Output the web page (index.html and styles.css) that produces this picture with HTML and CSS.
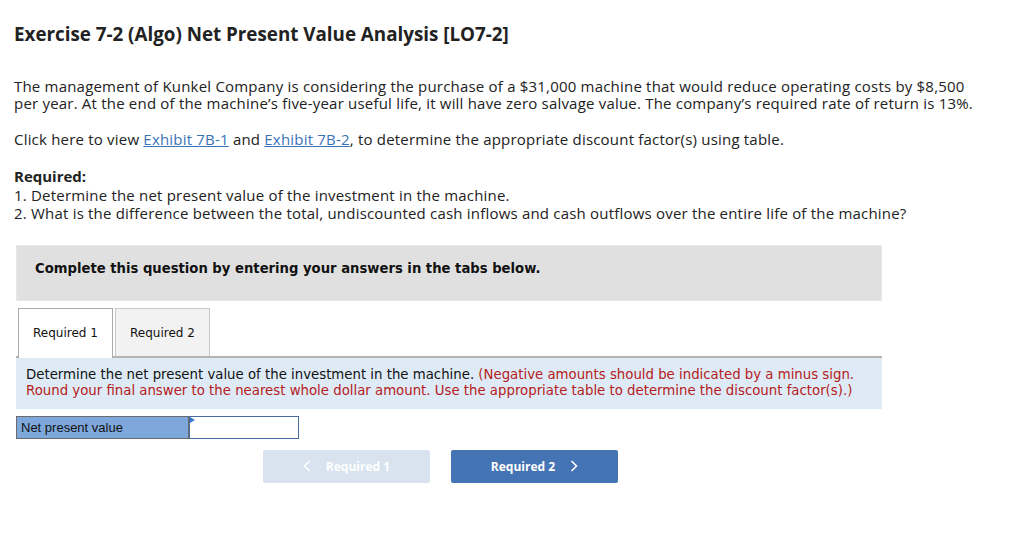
FILE: index.html
```html
<!DOCTYPE html>
<html>
<head>
<meta charset="utf-8">
<link rel="stylesheet" href="styles.css">
</head>
<body>
<div class="page">
  <h1 class="title">Exercise 7-2 (Algo) Net Present Value Analysis [LO7-2]</h1>
  <p class="para">The management of Kunkel Company is considering the purchase of a $31,000 machine that would reduce operating costs by $8,500 per year. At the end of the machine’s five-year useful life, it will have zero salvage value. The company’s required rate of return is 13%.</p>
  <p class="para">Click here to view <a class="link" href="#">Exhibit 7B-1</a> and <a class="link" href="#">Exhibit 7B-2</a>, to determine the appropriate discount factor(s) using table.</p>
  <div class="req">
    <div class="req-head">Required:</div>
    <div>1. Determine the net present value of the investment in the machine.</div>
    <div>2. What is the difference between the total, undiscounted cash inflows and cash outflows over the entire life of the machine?</div>
  </div>
  <div class="widget">
    <div class="banner">Complete this question by entering your answers in the tabs below.</div>
    <div class="tabs">
      <div class="tab active">Required 1</div>
      <div class="tab">Required 2</div>
    </div>
    <div class="instr">Determine the net present value of the investment in the machine. <span class="note">(Negative amounts should be indicated by a minus sign. Round your final answer to the nearest whole dollar amount. Use the appropriate table to determine the discount factor(s).)</span></div>
    <div class="answer-row">
      <div class="answer-label">Net present value</div>
      <div class="answer-input"><span class="flag"></span></div>
    </div>
    <div class="nav">
      <div class="btn btn-prev"><svg class="chev" width="8" height="12" viewBox="0 0 8 12"><path d="M6.5 1 L1.5 6 L6.5 11" fill="none" stroke="#fff" stroke-width="1.6"/></svg><span>Required 1</span></div>
      <div class="btn btn-next"><span>Required 2</span><svg class="chev" width="8" height="12" viewBox="0 0 8 12"><path d="M1.5 1 L6.5 6 L1.5 11" fill="none" stroke="#fff" stroke-width="1.6"/></svg></div>
    </div>
  </div>
</div>
</body>
</html>
```
FILE: styles.css
```css
html, body { margin: 0; padding: 0; background: #fff; }
.page {
  padding: 22px 0 0 14px;
  font-family: "Open Sans", "Lato", sans-serif;
  color: #222;
  width: 1000px;
}
.title {
  margin: 0 0 32px 0;
  font-size: 18.8px;
  font-weight: 700;
  line-height: 24px;
  color: #222;
}
.para {
  margin: 0 0 19px 0;
  font-size: 15px;
  letter-spacing: 0.2px;
  line-height: 17px;
  width: 960px;
}
.link { color: #3b73b9; text-decoration: underline; }
.req { font-size: 15px; letter-spacing: 0.2px; line-height: 18.5px; margin-top: 4px; }
.req-head { font-weight: 700; letter-spacing: 0; }
.widget {
  margin: 22px 0 0 2px;
  width: 866px;
  font-family: "DejaVu Sans", Verdana, sans-serif;
}
.banner {
  background: #e0e0e0;
  border: 1px solid #e8e8e8;
  height: 56px;
  box-sizing: border-box;
  padding: 15px 0 0 18px;
  font-weight: 700;
  font-size: 13.2px;
  color: #111;
}
.tabs {
  display: flex;
  gap: 2px;
  margin: 7px 0 0 2px;
  height: 48px;
}
.tab {
  width: 95px;
  box-sizing: border-box;
  border: 1px solid #c8c8c8;
  border-bottom: none;
  background: #f2f2f2;
  font-size: 12px;
  color: #111;
  display: flex;
  align-items: center;
  justify-content: center;
  padding-top: 2px;
}
.tab.active { background: #fff; border-color: #aaa; height: 50px; position: relative; z-index: 1; padding-top: 0; }
.instr {
  border-top: 2px solid #b4b4b4;
  background: #deebf7;
  padding: 9px 10px 9px 10px;
  font-size: 13.3px;
  line-height: 16.5px;
  color: #111;
}
.note { color: #b52020; }
.answer-row {
  display: flex;
  margin-top: 7px;
  height: 23px;
  font-family: "Liberation Sans", Arial, sans-serif;
}
.answer-label {
  width: 173px;
  box-sizing: border-box;
  background: #7ea8dc;
  border: 1px solid #6b6b6b;
  font-size: 13px;
  color: #111;
  padding: 3px 0 0 4px;
}
.answer-input {
  width: 110px;
  box-sizing: border-box;
  border: 1px solid #4a6b9c;
  background: #fff;
  position: relative;
}
.flag {
  position: absolute;
  left: 0; top: 0;
  width: 0; height: 0;
  border-top: 3px solid transparent;
  border-bottom: 3px solid transparent;
  border-left: 5px solid #3c78c8;
}
.nav {
  display: flex;
  gap: 21px;
  margin: 11px 0 0 247px;
  font-family: "Open Sans", "Lato", sans-serif;
}
.btn {
  width: 167px;
  height: 33px;
  border-radius: 2px;
  display: flex;
  align-items: center;
  justify-content: center;
  gap: 15px;
  font-size: 12px;
  font-weight: 700;
  color: #fff;
}
.btn-prev { background: #d8e3ef; }
.btn-next { background: #4574b4; }
.chev { display: block; }
```
